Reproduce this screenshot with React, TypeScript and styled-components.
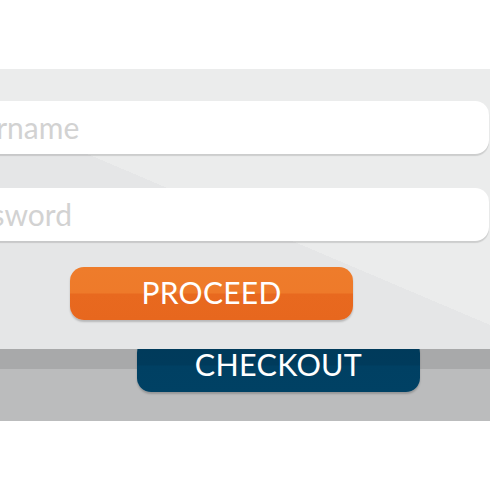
import React from "react";
import styled, { createGlobalStyle } from "styled-components";

const Global = createGlobalStyle`
  html, body { margin: 0; padding: 0; background: #ffffff; }
  body { font-family: Lato, "Open Sans", sans-serif; overflow: hidden; }
`;

const Stage = styled.div`
  width: 490px;
  height: 490px;
  overflow: hidden;
  background: #ffffff;
  padding-top: 69px;
  box-sizing: border-box;
`;

const Panel = styled.div`
  position: relative;
  z-index: 1;
  margin-left: -100px;
  width: 590px;
  height: 280px;
  box-sizing: border-box;
  padding-top: 32px;
  display: flex;
  flex-direction: column;
  background: linear-gradient(203deg, #ebecec 235.6px, #e5e6e7 235.6px);
`;

const Field = styled.div<{ $gap: number }>`
  height: 53px;
  width: 589px;
  margin-bottom: ${(p) => p.$gap}px;
  box-sizing: border-box;
  padding-left: 46px;
  padding-bottom: 2px;
  display: flex;
  align-items: center;
  background: #ffffff;
  border-radius: 14px;
  box-shadow: 0 2px 1px rgba(0, 0, 0, 0.13);
  font-size: 30px;
  color: #d2d2d2;
  white-space: nowrap;
`;

const Button = styled.div<{ $tone: "orange" | "navy"; $left: number }>`
  width: 283px;
  height: 53px;
  box-sizing: border-box;
  padding-bottom: 3px;
  margin-left: ${(p) => p.$left}px;
  border-radius: 14px;
  display: flex;
  align-items: center;
  justify-content: center;
  color: #ffffff;
  font-size: ${(p) => (p.$tone === "orange" ? 30 : 30.5)}px;
  letter-spacing: 0.3px;
  background: ${(p) =>
    p.$tone === "orange"
      ? "linear-gradient(to bottom, #ee7c2b 0, #ee7a2a 49%, #e8691f 51%, #e7671e 100%)"
      : "linear-gradient(to bottom, #003a5a 0, #003b5c 49%, #004063 51%, #004164 100%)"};
  box-shadow: 0 2px 2px rgba(0, 0, 0, 0.2);
  flex-shrink: 0;
`;

const Base = styled.div`
  height: 72px;
  background: linear-gradient(to bottom, #a8a9aa 0, #a8a9aa 20px, #bbbcbd 20px);
  display: flex;
  flex-direction: column;
`;

const CheckoutWrap = styled.div`
  margin-top: -10px;
`;

export default function App() {
  return (
    <>
      <Global />
      <Stage>
        <Panel>
          <Field $gap={34}>Username</Field>
          <Field $gap={26}>Password</Field>
          <Button $tone="orange" $left={170}>PROCEED</Button>
        </Panel>
        <Base>
          <CheckoutWrap>
            <Button $tone="navy" $left={137}>CHECKOUT</Button>
          </CheckoutWrap>
        </Base>
      </Stage>
    </>
  );
}
